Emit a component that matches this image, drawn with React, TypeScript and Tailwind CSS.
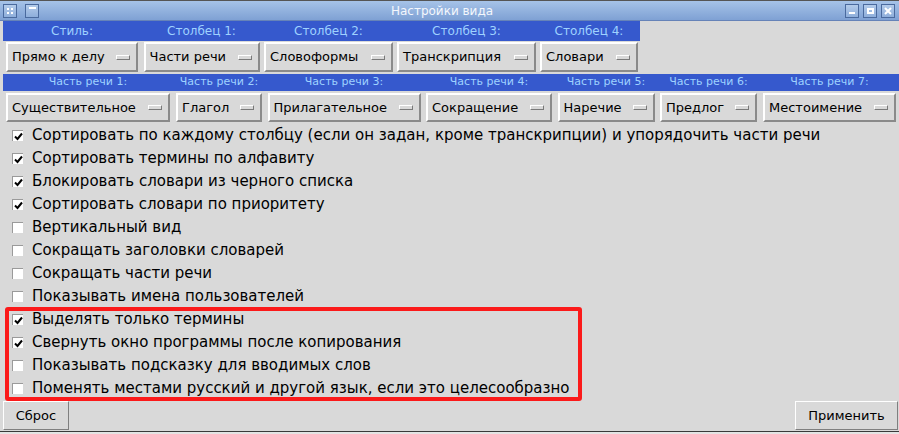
import React from "react";

type Cell = { label: string; value: string; col: string; btn: string };

const styleRow: Cell[] = [
  { label: "Стиль:", value: "Прямо к делу", col: "w-[138px]", btn: "w-[132px]" },
  { label: "Столбец 1:", value: "Части речи", col: "w-[121px]", btn: "w-[116px]" },
  { label: "Столбец 2:", value: "Словоформы", col: "w-[133px]", btn: "w-[129px]" },
  { label: "Столбец 3:", value: "Транскрипция", col: "w-[143px]", btn: "w-[139px]" },
  { label: "Столбец 4:", value: "Словари", col: "w-[102px]", btn: "w-[98px]" },
];

const speechRow: Cell[] = [
  { label: "Часть речи 1:", value: "Существительное", col: "w-[170px]", btn: "w-[164px]" },
  { label: "Часть речи 2:", value: "Глагол", col: "w-[92px]", btn: "w-[86px]" },
  { label: "Часть речи 3:", value: "Прилагательное", col: "w-[158px]", btn: "w-[153px]" },
  { label: "Часть речи 4:", value: "Сокращение", col: "w-[132px]", btn: "w-[126px]" },
  { label: "Часть речи 5:", value: "Наречие", col: "w-[102px]", btn: "w-[97px]" },
  { label: "Часть речи 6:", value: "Предлог", col: "w-[103px]", btn: "w-[97px]" },
  { label: "Часть речи 7:", value: "Местоимение", col: "w-[139px]", btn: "w-[133px]" },
];

const options: [string, boolean][] = [
  ["Сортировать по каждому столбцу (если он задан, кроме транскрипции) и упорядочить части речи", true],
  ["Сортировать термины по алфавиту", true],
  ["Блокировать словари из черного списка", true],
  ["Сортировать словари по приоритету", true],
  ["Вертикальный вид", false],
  ["Сокращать заголовки словарей", false],
  ["Сокращать части речи", false],
  ["Показывать имена пользователей", false],
  ["Выделять только термины", true],
  ["Свернуть окно программы после копирования", true],
  ["Показывать подсказку для вводимых слов", false],
  ["Поменять местами русский и другой язык, если это целесообразно", false],
];

const MenuButton = ({ value, width, height }: { value: string; width: string; height: string }) => (
  <div
    className={`${width} ${height} mx-auto flex items-center justify-between border-2 border-t-white border-l-white border-r-[#8a8a8a] border-b-[#8a8a8a] bg-[#d9d9d9] pl-[4px] pr-[6px] text-[13px] text-black whitespace-nowrap`}>
    <span>{value}</span>
    <span className="w-[14px] h-[5px] border border-t-white border-l-white border-r-[#7a7a7a] border-b-[#7a7a7a] bg-[#d9d9d9]" />
  </div>
);

const TitleBox = ({ children }: { children?: React.ReactNode }) => (
  <div className="w-[14px] h-[14px] border border-[#4a6a9e] bg-gradient-to-b from-[#b3cbea] to-[#8eaedb] flex items-center justify-center">
    {children}
  </div>
);

const CheckBox = ({ checked }: { checked: boolean }) => (
  <div className="w-[11px] h-[11px] bg-white border-t border-l border-[#9a9a9a] border-r-white border-b-white flex items-center justify-center">
    {checked && (
      <svg width="9" height="9" viewBox="0 0 9 9">
        <path d="M1 4.5 L3.5 7 L8 1.5" fill="none" stroke="#000" strokeWidth="2" />
      </svg>
    )}
  </div>
);

export default function App() {
  return (
    <div className="relative w-[899px] h-[434px] overflow-hidden bg-[#d9d9d9] font-['DejaVu_Sans',sans-serif]">
      {/* title bar */}
      <div className="relative h-[21px] border-t border-[#555] border-b border-b-[#6683b8] bg-gradient-to-b from-[#a6c3e8] to-[#7fa1d4] flex items-center">
        <div className="flex items-center gap-[8px] pl-[3px]">
          <TitleBox>
            <div className="grid grid-cols-2 gap-[2px]">
              <span className="w-[2px] h-[2px] bg-white" />
              <span className="w-[2px] h-[2px] bg-white" />
              <span className="w-[2px] h-[2px] bg-white" />
              <span className="w-[2px] h-[2px] bg-white" />
            </div>
          </TitleBox>
          <TitleBox>
            <span className="w-[7px] h-[2px] bg-white mb-[5px]" />
          </TitleBox>
        </div>
        <div className="flex-1 text-center text-[12px] text-[#f4f7fc]">Настройки вида</div>
        <div className="flex items-center gap-[4px] pr-[4px]">
          <TitleBox>
            <span className="w-[6px] h-[2px] bg-white mt-[5px]" />
          </TitleBox>
          <TitleBox>
            <span className="w-[7px] h-[6px] border-2 border-white" />
          </TitleBox>
          <TitleBox>
            <svg width="8" height="8" viewBox="0 0 8 8">
              <path d="M1 1 L7 7 M7 1 L1 7" stroke="#fff" strokeWidth="2" />
            </svg>
          </TitleBox>
        </div>
      </div>

      {/* style and columns */}
      <div className="flex pl-[3px] pb-[2px]">
        {styleRow.map((c) => (
          <div key={c.label} className={`${c.col} flex flex-col`}>
            <div className="h-[20px] bg-[#3659cd] text-[12px] text-[#9fd2ff] flex items-center justify-center">
              {c.label}
            </div>
            <div className="pt-[1px]">
              <MenuButton value={c.value} width={c.btn} height="h-[30px]" />
            </div>
          </div>
        ))}
      </div>

      {/* parts of speech */}
      <div className="flex pl-[3px] pb-[2px]">
        {speechRow.map((c) => (
          <div key={c.label} className={`${c.col} flex flex-col`}>
            <div className="h-[17px] bg-[#3659cd] text-[11px] text-[#9fd2ff] flex items-center justify-center">
              {c.label}
            </div>
            <div className="pt-[2px]">
              <MenuButton value={c.value} width={c.btn} height="h-[29px]" />
            </div>
          </div>
        ))}
      </div>

      {/* options */}
      <div className="flex flex-col">
        {options.map(([text, checked]) => (
          <div key={text} className="h-[23px] flex items-center pl-[12px] gap-[9px] text-[15px] text-black whitespace-nowrap">
            <CheckBox checked={checked} />
            <span>{text}</span>
          </div>
        ))}
      </div>

      {/* footer buttons */}
      <div className="flex justify-between pl-[3px] pr-[1px] pt-[1px]">
        <button className="w-[66px] h-[29px] border border-t-white border-l-white border-r-[#7f7f7f] border-b-[#7f7f7f] bg-[#d9d9d9] text-[13px] text-black">
          Сброс
        </button>
        <button className="w-[103px] h-[29px] border border-t-white border-l-white border-r-[#7f7f7f] border-b-[#7f7f7f] bg-[#d9d9d9] text-[13px] text-black">
          Применить
        </button>
      </div>
      <div className="mt-[1px] h-[3px] border-t border-[#3a3a3a] bg-[#e4e4e4]" />

      {/* highlight annotation */}
      <div className="absolute left-[5px] top-[307px] w-[577px] h-[94px] border-4 border-[#fb1a1a] rounded-[3px]" />
    </div>
  );
}
